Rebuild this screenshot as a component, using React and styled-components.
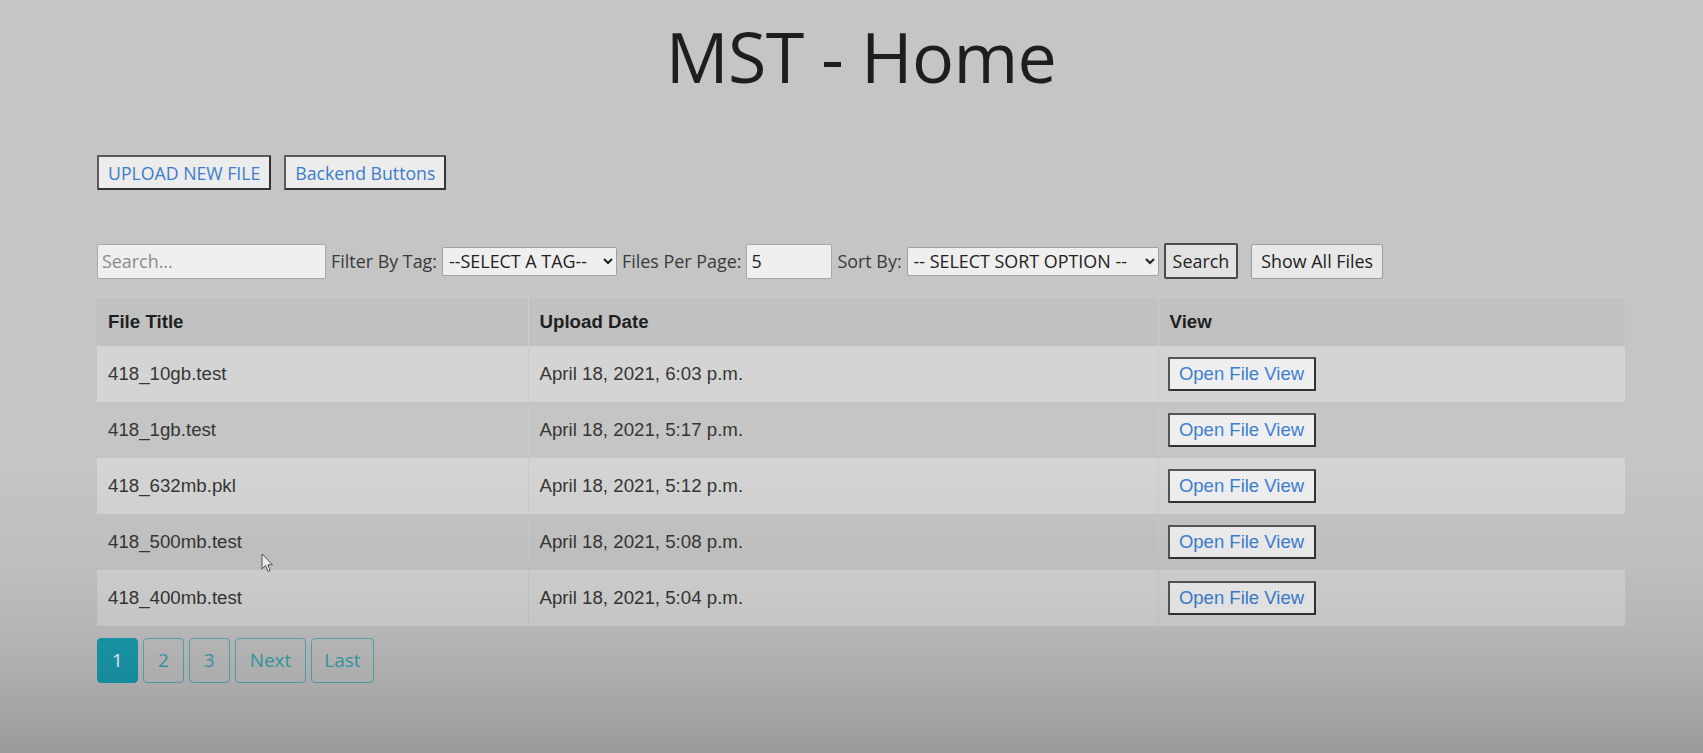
import React from "react";
import styled, { createGlobalStyle } from "styled-components";

const GlobalStyle = createGlobalStyle`
  html, body {
    margin: 0;
    padding: 0;
    background: #c5c5c5;
  }
  body {
    font-family: "Open Sans", "Noto Sans", sans-serif;
    color: #222;
  }
  * { box-sizing: border-box; }
`;

const Page = styled.div`
  position: relative;
  min-height: 753px;
  padding: 21px 78px 40px 97px;
`;

const Shade = styled.div`
  position: fixed;
  inset: 0;
  pointer-events: none;
  background: linear-gradient(
    to bottom,
    rgba(0, 0, 0, 0) 0%,
    rgba(0, 0, 0, 0) 62%,
    rgba(0, 0, 0, 0.035) 75%,
    rgba(0, 0, 0, 0.07) 83%,
    rgba(0, 0, 0, 0.12) 90%,
    rgba(0, 0, 0, 0.21) 100%
  );
`;

const Title = styled.h1`
  margin: 0;
  font-family: "Open Sans", sans-serif;
  font-weight: 400;
  font-size: 70px;
  line-height: 70px;
  letter-spacing: -0.6px;
  text-align: center;
  color: #1e1e1e;
`;

const ActionBar = styled.div`
  display: flex;
  gap: 13px;
  margin-top: 64px;
`;

const ActionButton = styled.button`
  height: 35px;
  padding: 0 9px;
  font-family: "Open Sans", sans-serif;
  font-size: 17.7px;
  color: #3a7dcc;
  background: #ececec;
  border: 2px solid #5a5a5a;
  border-right-color: #333;
  border-bottom-color: #333;
  border-radius: 1px;
  cursor: pointer;
`;

const FilterBar = styled.div`
  display: flex;
  align-items: center;
  gap: 5px;
  margin-top: 53px;
  height: 36px;
`;

const Label = styled.label`
  font-size: 17.9px;
  color: #3a3a3a;
  white-space: nowrap;
`;

const TextInput = styled.input`
  width: ${(p) => p.$w}px;
  height: 35px;
  padding: 0 4px;
  font-family: "Open Sans", sans-serif;
  font-size: 17.9px;
  color: #222;
  background: #efefef;
  border: 1px solid #a8a8a8;
  border-radius: 2px;
  outline: none;
  &::placeholder { color: #8a8a8a; }
`;

const Select = styled.select`
  width: ${(p) => p.$w}px;
  height: 29px;
  padding: 0 2px;
  font-family: "Open Sans", sans-serif;
  font-size: 17.9px;
  color: #222;
  background: #efefef;
  border: 1px solid #a0a0a0;
  border-radius: 2px;
`;

const BarButton = styled.button`
  height: ${(p) => (p.$focused ? 36 : 35)}px;
  padding: 0 ${(p) => (p.$focused ? 7 : 9)}px;
  font-family: "Open Sans", sans-serif;
  font-size: 17.9px;
  color: #222;
  background: ${(p) => (p.$focused ? "#e2e2e2" : "#e8e8e8")};
  border: ${(p) => (p.$focused ? "2px solid #4a4a4a" : "1px solid #9d9d9d")};
  border-radius: 2px;
  margin-left: ${(p) => p.$ml || 0}px;
`;

const Table = styled.table`
  width: 1528px;
  margin-top: 18px;
  border-collapse: collapse;
  font-family: "Liberation Sans", Arial, sans-serif;
  font-size: 18.7px;
`;

const HeadCell = styled.th`
  height: 48px;
  width: ${(p) => p.$w}px;
  padding: 0 11px;
  text-align: left;
  font-weight: 700;
  color: #1f1f1f;
  background: #c1c1c1;
  border-top: 1px solid #cbcbcb;
  & + & { border-left: 1px solid #cdcdcd; }
`;

const Row = styled.tr`
  background: ${(p) => (p.$odd ? "#d4d4d4" : "#c5c5c5")};
`;

const Cell = styled.td`
  height: 56px;
  padding: 0 11px 0 ${(p) => p.$pl || 11}px;
  color: #363636;
  & + & { border-left: 1px solid #cacaca; }
`;

const ViewButton = styled.button`
  width: 148px;
  height: 34px;
  padding: 0;
  font-family: "Liberation Sans", Arial, sans-serif;
  font-size: 18.5px;
  color: #3b7fd2;
  background: #efefef;
  border: 2px solid #555;
  border-right-color: #333;
  border-bottom-color: #333;
  border-radius: 1px;
  display: block;
  margin-top: 1px;
`;

const Pager = styled.div`
  display: flex;
  gap: 5px;
  margin-top: 12px;
`;

const PageBtn = styled.button`
  height: 45px;
  padding: 0 ${(p) => p.$px || 14}px;
  font-family: "Open Sans", sans-serif;
  font-size: 19px;
  color: ${(p) => (p.$active ? "#ffffff" : "#3aa4b4")};
  background: ${(p) => (p.$active ? "#1a9fb2" : "transparent")};
  border: 1px solid ${(p) => (p.$active ? "#1a9fb2" : "#55b1bd")};
  border-radius: 4px;
`;

const Cursor = styled.svg`
  position: absolute;
  left: 261px;
  top: 553px;
  pointer-events: none;
`;

const files = [
  ["418_10gb.test", "April 18, 2021, 6:03 p.m."],
  ["418_1gb.test", "April 18, 2021, 5:17 p.m."],
  ["418_632mb.pkl", "April 18, 2021, 5:12 p.m."],
  ["418_500mb.test", "April 18, 2021, 5:08 p.m."],
  ["418_400mb.test", "April 18, 2021, 5:04 p.m."],
];

export default function App() {
  return (
    <Page>
      <GlobalStyle />
      <Title>MST - Home</Title>

      <ActionBar>
        <ActionButton>UPLOAD NEW FILE</ActionButton>
        <ActionButton>Backend Buttons</ActionButton>
      </ActionBar>

      <FilterBar>
        <TextInput $w={229} placeholder="Search..." />
        <Label>Filter By Tag:</Label>
        <Select $w={175} defaultValue="">
          <option value="">--SELECT A TAG--</option>
        </Select>
        <Label>Files Per Page:</Label>
        <TextInput $w={86} defaultValue="5" />
        <Label>Sort By:</Label>
        <Select $w={252} defaultValue="">
          <option value="">-- SELECT SORT OPTION --</option>
        </Select>
        <BarButton $focused>Search</BarButton>
        <BarButton $ml={8}>Show All Files</BarButton>
      </FilterBar>

      <Table>
        <thead>
          <tr>
            <HeadCell $w={431}>File Title</HeadCell>
            <HeadCell $w={630}>Upload Date</HeadCell>
            <HeadCell $w={467}>View</HeadCell>
          </tr>
        </thead>
        <tbody>
          {files.map(([name, date], i) => (
            <Row key={name} $odd={i % 2 === 0}>
              <Cell>{name}</Cell>
              <Cell>{date}</Cell>
              <Cell $pl={9}>
                <ViewButton>Open File View</ViewButton>
              </Cell>
            </Row>
          ))}
        </tbody>
      </Table>

      <Pager>
        <PageBtn $active>1</PageBtn>
        <PageBtn>2</PageBtn>
        <PageBtn>3</PageBtn>
        <PageBtn>Next</PageBtn>
        <PageBtn $px={12}>Last</PageBtn>
      </Pager>

      <Cursor width="14" height="21" viewBox="0 0 14 21">
        <path
          d="M1 1 L1 16 L4.5 12.5 L7 18.5 L9.2 17.6 L6.8 11.8 L11.5 11.8 Z"
          fill="#f4f4f4"
          stroke="#555"
          strokeWidth="1"
          strokeLinejoin="round"
        />
      </Cursor>
      <Shade />
    </Page>
  );
}
